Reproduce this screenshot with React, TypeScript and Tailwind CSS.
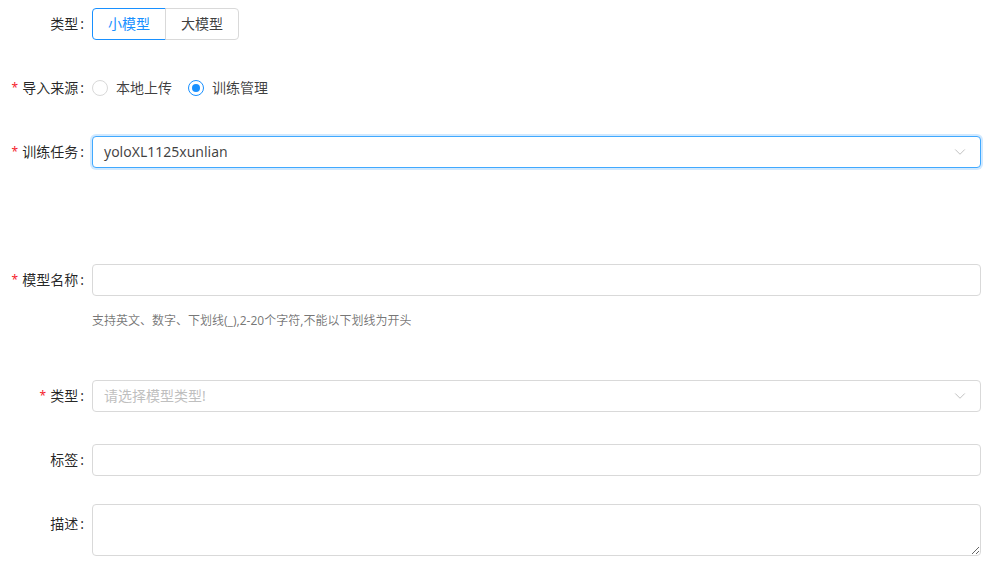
import { ChevronDown } from 'lucide-react'

const font = { fontFamily: '"Noto Sans", "Noto Sans CJK SC", sans-serif' }

function Label({ text, required, top }: { text: string; required?: boolean; top?: boolean }) {
  return (
    <div
      className={
        top
          ? 'flex h-10 w-[92px] shrink-0 items-center justify-end self-start text-sm leading-[22px] text-[rgba(0,0,0,0.85)]'
          : 'flex w-[92px] shrink-0 items-center justify-end text-sm leading-[22px] text-[rgba(0,0,0,0.85)]'
      }
    >
      {required && <span className="mr-1 text-xs text-[#f5222d]">*</span>}
      <span>{text}</span>
      <span className="ml-0.5 mr-2">:</span>
    </div>
  )
}

function Select({ value, placeholder, focused }: { value?: string; placeholder?: string; focused?: boolean }) {
  return (
    <div
      className={
        focused
          ? 'flex h-8 flex-1 items-center justify-between rounded border border-[#40a9ff] bg-white pl-[11px] pr-[11px] shadow-[0_0_0_2px_rgba(24,144,255,0.2)]'
          : 'flex h-8 flex-1 items-center justify-between rounded border border-[#d9d9d9] bg-white pl-[11px] pr-[11px]'
      }
    >
      {value ? (
        <span className="text-sm text-[rgba(0,0,0,0.75)]">{value}</span>
      ) : (
        <span className="text-sm text-[#bfbfbf]">{placeholder}</span>
      )}
      <ChevronDown className="h-[18px] w-[18px] text-[#bfbfbf]" strokeWidth={1.3} />
    </div>
  )
}

function Radio({ label, checked }: { label: string; checked?: boolean }) {
  return (
    <label className="mr-2 flex items-center">
      <span
        className={
          checked
            ? 'flex h-4 w-4 items-center justify-center rounded-full border border-[#1890ff] bg-white'
            : 'flex h-4 w-4 items-center justify-center rounded-full border border-[#d9d9d9] bg-white'
        }
      >
        {checked && <span className="h-2 w-2 rounded-full bg-[#1890ff]" />}
      </span>
      <span className="px-2 text-sm text-[rgba(0,0,0,0.75)]">{label}</span>
    </label>
  )
}

export default function App() {
  return (
    <div className="min-h-screen w-full bg-white pr-[14px]" style={font}>
      <div className="flex flex-col pt-2">
        {/* 类型 toggle */}
        <div className="flex h-8 items-center">
          <Label text="类型" />
          <div className="flex">
            <button className="h-8 rounded-l border border-[#1890ff] px-[15px] text-sm text-[#1890ff]">小模型</button>
            <button className="-ml-px h-8 rounded-r border border-[#d9d9d9] px-[15px] text-sm text-[rgba(0,0,0,0.75)]">
              大模型
            </button>
          </div>
        </div>

        {/* 导入来源 */}
        <div className="mt-8 flex h-8 items-center">
          <Label text="导入来源" required />
          <div className="flex items-center">
            <Radio label="本地上传" />
            <Radio label="训练管理" checked />
          </div>
        </div>

        {/* 训练任务 */}
        <div className="mt-8 flex h-8 items-center">
          <Label text="训练任务" required />
          <Select value="yoloXL1125xunlian" focused />
        </div>

        {/* 模型名称 */}
        <div className="mt-24 flex h-8 items-center">
          <Label text="模型名称" required />
          <input className="h-8 flex-1 rounded border border-[#d9d9d9] px-[11px] text-sm outline-none" />
        </div>
        <div className="mt-[15px] pl-[92px] text-xs leading-5 text-[rgba(0,0,0,0.55)]">
          支持英文、数字、下划线(_),2-20个字符,不能以下划线为开头
        </div>

        {/* 类型 select */}
        <div className="mt-[49px] flex h-8 items-center">
          <Label text="类型" required />
          <Select placeholder="请选择模型类型!" />
        </div>

        {/* 标签 */}
        <div className="mt-8 flex h-8 items-center">
          <Label text="标签" />
          <input className="h-8 flex-1 rounded border border-[#d9d9d9] px-[11px] text-sm outline-none" />
        </div>

        {/* 描述 */}
        <div className="mt-7 flex">
          <Label text="描述" top />
          <textarea className="h-[52px] flex-1 rounded border border-[#d9d9d9] px-[11px] py-1 text-sm outline-none" />
        </div>
      </div>
    </div>
  )
}
